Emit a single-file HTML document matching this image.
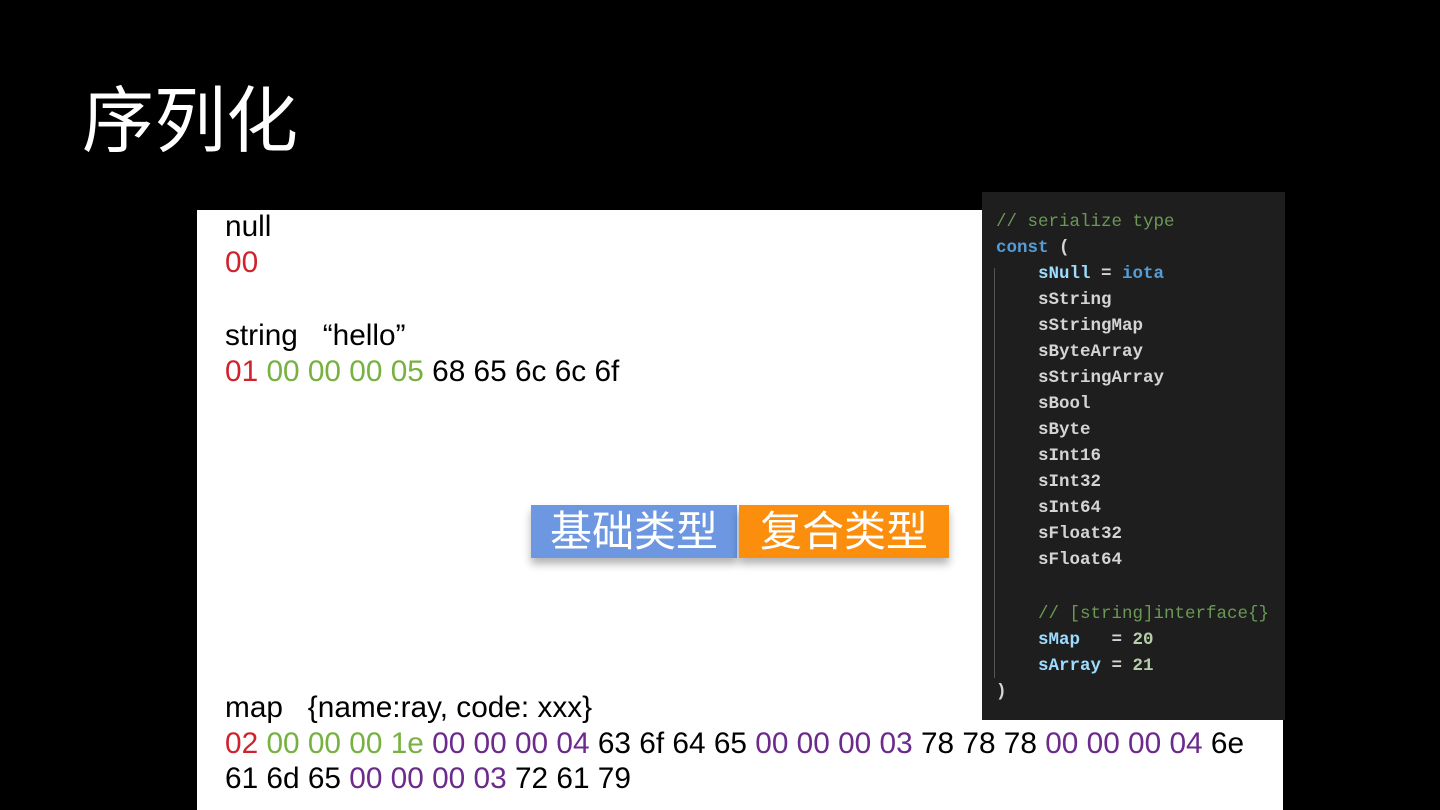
<!DOCTYPE html>
<html><head><meta charset="utf-8"><style>
body{margin:0;width:1440px;height:810px;background:#000;position:relative;overflow:hidden;font-family:"Liberation Sans","Noto Sans CJK SC",sans-serif}
.t{position:absolute;left:82px;top:77px;color:#fff;font-size:72px;line-height:90px}
.w{position:absolute;left:197px;top:210px;width:1086px;height:600px;background:#fff}
.l{position:absolute;left:225px;font-size:29.8px;color:#000;white-space:nowrap;line-height:36px}
.r{color:#d0232b}.g{color:#77b140}.p{color:#6b2a8c}
.code{position:absolute;left:982px;top:192px;width:303px;height:528px;background:#1e1e1e;font-family:"Liberation Mono",monospace;font-size:17.5px;color:#d4d4d4;font-weight:bold}
.code div{position:absolute;left:14px;white-space:pre;line-height:26px}
.cm{color:#6a9955;font-weight:normal}.kw{color:#569cd6}.v{color:#9cdcfe}.n{color:#b5cea8}
.bar{position:absolute;left:994px;top:268px;width:1px;height:410px;background:#555}
.b{position:absolute;top:505px;height:53px;color:#fff;font-size:42px;line-height:53px;text-align:center;box-shadow:0 6px 8px rgba(0,0,0,.3)}
</style></head><body>
<div class="t">序列化</div>
<div class="w"></div>
<div class="l" style="top:209px">null</div>
<div class="l r" style="top:245px">00</div>
<div class="l" style="top:318px">string &nbsp;&nbsp;“hello”</div>
<div class="l" style="top:354px"><span class="r">01</span> <span class="g">00 00 00 05</span> 68 65 6c 6c 6f</div>
<div class="l" style="top:690px">map &nbsp;&nbsp;{name:ray, code: xxx}</div>
<div class="l" style="top:726px"><span class="r">02</span> <span class="g">00 00 00 1e</span> <span class="p">00 00 00 04</span> 63 6f 64 65 <span class="p">00 00 00 03</span> 78 78 78 <span class="p">00 00 00 04</span> 6e</div>
<div class="l" style="top:761px">61 6d 65 <span class="p">00 00 00 03</span> 72 61 79</div>
<div class="b" style="left:531px;width:206px;background:#6d97e0">基础类型</div>
<div class="b" style="left:739px;width:210px;background:#fb8e0c">复合类型</div>
<div class="code">
<div class="cm" style="top:17px">// serialize type</div>
<div style="top:43px"><span class="kw">const</span> (</div>
<div style="top:69px">    <span class="v">sNull</span> = <span class="kw">iota</span></div>
<div style="top:95px">    sString</div>
<div style="top:121px">    sStringMap</div>
<div style="top:147px">    sByteArray</div>
<div style="top:173px">    sStringArray</div>
<div style="top:199px">    sBool</div>
<div style="top:225px">    sByte</div>
<div style="top:251px">    sInt16</div>
<div style="top:277px">    sInt32</div>
<div style="top:303px">    sInt64</div>
<div style="top:329px">    sFloat32</div>
<div style="top:355px">    sFloat64</div>
<div class="cm" style="top:409px">    // [string]interface{}</div>
<div style="top:435px">    <span class="v">sMap</span>   = <span class="n">20</span></div>
<div style="top:461px">    <span class="v">sArray</span> = <span class="n">21</span></div>
<div style="top:487px">)</div>
</div>
<div class="bar"></div>
</body></html>
